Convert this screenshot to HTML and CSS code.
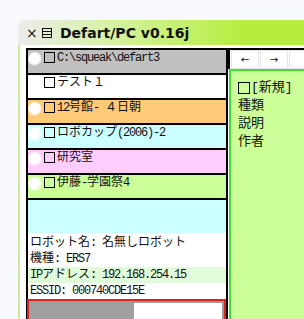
FILE: index.html
```html
<!doctype html>
<html>
<head>
	<meta charset="UTF-8">
	<title>Defart/PC</title>
	<link rel="stylesheet" href="styles.css">
</head>
<body>
	<div class="win">
		<div class="win-title">
			<span class="win-close">×</span>
			<svg class="win-menu" width="10" height="10" viewBox="0 0 10 10">
				<rect x="0.5" y="0.5" width="9" height="9" fill="none" stroke="#111"/>
				<line x1="1" y1="3.5" x2="9" y2="3.5" stroke="#111"/>
				<line x1="1" y1="6.5" x2="9" y2="6.5" stroke="#111"/>
			</svg>
			<span class="win-name">Defart/PC v0.16j</span>
		</div>
		<div class="win-body">
			<div class="side">
				<ul class="proj-list">
					<li class="proj proj-gray"><i class="knob"></i><i class="chk"></i><span class="a">C:\squeak\defart3</span></li>
					<li class="proj proj-white"><i class="knob"></i><i class="chk"></i><span>テスト１</span></li>
					<li class="proj proj-orange"><i class="knob"></i><i class="chk"></i><span><span class="a">12</span>号館<span class="a">- </span>４日朝</span></li>
					<li class="proj proj-cyan"><i class="knob"></i><i class="chk"></i><span>ロボカップ<span class="a">(2006)-2</span></span></li>
					<li class="proj proj-pink"><i class="knob"></i><i class="chk"></i><span>研究室</span></li>
					<li class="proj proj-lime"><i class="knob"></i><i class="chk"></i><span>伊藤<span class="a">-</span>学園祭<span class="a">4</span></span></li>
				</ul>
				<div class="spare"></div>
				<ul class="robot">
					<li>ロボット名<span class="a">: </span>名無しロボット</li>
					<li>機種<span class="a">: ERS7</span></li>
					<li class="robot-ip"><span class="a">IP</span>アドレス<span class="a">: 192.168.254.15</span></li>
					<li><span class="a">ESSID: 000740CDE15E</span></li>
				</ul>
				<div class="pane">
					<div class="pane-in">
						<div class="pane-l"></div>
						<div class="pane-r"></div>
					</div>
				</div>
			</div>
			<div class="main">
				<div class="nav">
					<span class="nav-btn">←</span>
					<span class="nav-btn">→</span>
					<span class="nav-btn"></span>
				</div>
				<div class="props">
					<p><i class="chk chk-big"></i>[新規]</p>
					<p>種類</p>
					<p>説明</p>
					<p>作者</p>
				</div>
			</div>
		</div>
	</div>
</body>
</html>
```
FILE: styles.css
```css
/* reset */
body,ul,li,p{margin:0;padding:0;}
ul{list-style:none;}
i{font-style:normal;}
html,body{height:100%;}
body{background:#f7f9fc;overflow:hidden;font:12px/16px "Liberation Mono", "Noto Sans CJK JP", monospace;color:#111;}
.a{letter-spacing:-1.2px;}

/* window */
.win{margin:20px 0 0 18px;width:300px;}
.win-title{display:flex;align-items:center;height:25px;padding-left:8px;border-radius:6px 0 0 0;background:linear-gradient(to right, #ececec 0, #d6f2a6 30%, #b6ee40 75%);}
.win-close{width:9px;font:14px/1 "DejaVu Sans", sans-serif;}
.win-menu{margin:0 8px 0 7px;}
.win-name{font:bold 14px/1 "DejaVu Sans", sans-serif;color:#111;}
.win-body{display:flex;padding:3px 0 0 6px;border-left:2px solid #cfe79c;background:#fff;height:271px;overflow:hidden;}

/* left side */
.side{width:212px;border:2px solid #000;border-bottom:0;background:#fff;}
.proj{display:flex;align-items:flex-start;height:21px;padding-top:2px;border-bottom:2px solid #000;}
.proj span{line-height:14px;margin-top:-1px;}
.proj-gray{background:#c0c0c0;}
.proj-white{background:#fff;}
.proj-orange{background:#ffca78;}
.proj-cyan{background:#ccffff;}
.proj-pink{background:#ffccff;}
.proj-lime{background:#ccff99;}
.knob{width:14px;height:14px;border-radius:50%;background:radial-gradient(circle at 45% 45%, #fff 45%, rgba(255,255,255,.6) 62%, rgba(255,255,255,0) 72%);}
.chk{display:block;width:9px;height:9px;margin:0 2px;border:1px solid #000;}
.spare{height:33px;background:#ccffff;}
.robot{padding:2px 0 0 2px;}
.robot li{height:16px;}
.robot .robot-ip{margin-left:-2px;padding-left:2px;background:#e0fcd8;}
.pane{border:2px solid #d82424;border-bottom:0;margin-left:-1px;}
.pane-in{display:flex;height:18px;border-top:2px solid #9a9a9a;border-right:2px solid #9a9a9a;}
.pane-l{width:105px;background:#a0a0a0;}
.pane-r{flex:1;background:#fff;}

/* right side */
.main{flex:1;display:flex;flex-direction:column;border-top:2px solid #000;}
.nav{display:flex;height:19px;border-left:2px solid #000;padding-left:1px;background:#fff;}
.nav-btn{width:26px;height:17px;margin-right:1px;border:1px solid #e4e4e4;font:10px/17px "DejaVu Sans", sans-serif;text-align:center;}
.props{flex:1;margin-left:1px;border-top:2px solid #44dd33;border-left:2px solid #44dd33;background:#ccff99;padding:8px 0 0 7px;font-size:13px;}
.props p{display:flex;align-items:center;line-height:18px;}
.chk-big{width:10px;height:10px;margin:0 1px 0 0;}
```
